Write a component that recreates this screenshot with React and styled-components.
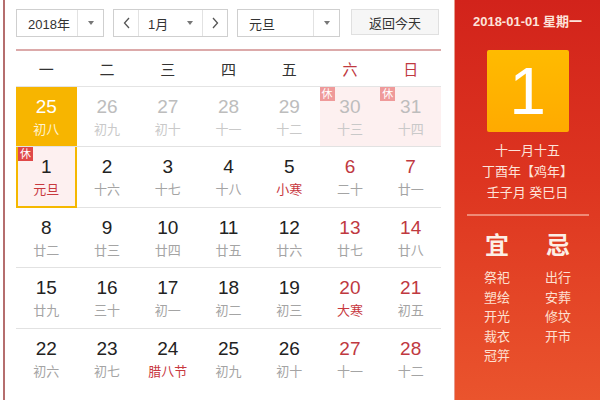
import React from "react";
import styled, { createGlobalStyle, css } from "styled-components";

const GlobalStyle = createGlobalStyle`
  html, body {
    margin: 0;
    padding: 0;
    background: #fff;
    font-family: "Liberation Sans", "Noto Sans CJK SC", sans-serif;
  }
`;

const weekdays = ["一", "二", "三", "四", "五", "六", "日"];

const rows = [
  [
    { d: 25, l: "初八", prev: true, today: true },
    { d: 26, l: "初九", prev: true },
    { d: 27, l: "初十", prev: true },
    { d: 28, l: "十一", prev: true },
    { d: 29, l: "十二", prev: true },
    { d: 30, l: "十三", prev: true, rest: true },
    { d: 31, l: "十四", prev: true, rest: true },
  ],
  [
    { d: 1, l: "元旦", fest: true, rest: true, selected: true },
    { d: 2, l: "十六" },
    { d: 3, l: "十七" },
    { d: 4, l: "十八" },
    { d: 5, l: "小寒", fest: true },
    { d: 6, l: "二十" },
    { d: 7, l: "廿一" },
  ],
  [
    { d: 8, l: "廿二" },
    { d: 9, l: "廿三" },
    { d: 10, l: "廿四" },
    { d: 11, l: "廿五" },
    { d: 12, l: "廿六" },
    { d: 13, l: "廿七" },
    { d: 14, l: "廿八" },
  ],
  [
    { d: 15, l: "廿九" },
    { d: 16, l: "三十" },
    { d: 17, l: "初一" },
    { d: 18, l: "初二" },
    { d: 19, l: "初三" },
    { d: 20, l: "大寒", fest: true },
    { d: 21, l: "初五" },
  ],
  [
    { d: 22, l: "初六" },
    { d: 23, l: "初七" },
    { d: 24, l: "腊八节", fest: true },
    { d: 25, l: "初九" },
    { d: 26, l: "初十" },
    { d: 27, l: "十一" },
    { d: 28, l: "十二" },
  ],
];

const yi = ["祭祀", "塑绘", "开光", "裁衣", "冠笄"];
const ji = ["出行", "安葬", "修坟", "开市"];

const Chevron = ({ dir }) => (
  <svg width="7" height="12" viewBox="0 0 7 12">
    <path
      d={dir === "left" ? "M6 1 L1.5 6 L6 11" : "M1 1 L5.5 6 L1 11"}
      fill="none"
      stroke="#555"
      strokeWidth="1.3"
    />
  </svg>
);

const App = () => {
  return (
    <>
      <GlobalStyle />
      <Page>
        <Main>
          <Toolbar>
            <Select $w={88}>
              <SelectText>2018年</SelectText>
              <ArrowBox>
                <Caret />
              </ArrowBox>
            </Select>
            <MonthGroup>
              <NavBtn>
                <Chevron dir="left" />
              </NavBtn>
              <MonthText>1月</MonthText>
              <MonthArrow>
                <Caret />
              </MonthArrow>
              <NavBtn $right>
                <Chevron dir="right" />
              </NavBtn>
            </MonthGroup>
            <Select $w={103}>
              <SelectText>元旦</SelectText>
              <ArrowBox>
                <Caret />
              </ArrowBox>
            </Select>
            <TodayButton>返回今天</TodayButton>
          </Toolbar>
          <Rule />
          <WeekRow>
            {weekdays.map((w, i) => (
              <WeekCell key={w} $weekend={i > 4}>
                {w}
              </WeekCell>
            ))}
          </WeekRow>
          {rows.map((row, ri) => (
            <Row key={ri} $last={ri === rows.length - 1}>
              {row.map((c, ci) => (
                <Cell
                  key={ci}
                  $today={c.today}
                  $rest={c.rest}
                  $selected={c.selected}
                >
                  {c.rest && <RestBadge $faded={c.prev}>休</RestBadge>}
                  <DayNum
                    $prev={c.prev}
                    $today={c.today}
                    $weekend={ci > 4}
                  >
                    {c.d}
                  </DayNum>
                  <Lunar $prev={c.prev} $today={c.today} $fest={c.fest}>
                    {c.l}
                  </Lunar>
                </Cell>
              ))}
            </Row>
          ))}
        </Main>
        <Side>
          <DateLine>2018-01-01 星期一</DateLine>
          <BigDay>1</BigDay>
          <LunarInfo>
            <div>十一月十五</div>
            <div>丁酉年【鸡年】</div>
            <div>壬子月 癸巳日</div>
          </LunarInfo>
          <SideRule />
          <Almanac>
            <AlmanacCol>
              <AlmanacHead>宜</AlmanacHead>
              {yi.map((t) => (
                <AlmanacItem key={t}>{t}</AlmanacItem>
              ))}
            </AlmanacCol>
            <AlmanacCol>
              <AlmanacHead>忌</AlmanacHead>
              {ji.map((t) => (
                <AlmanacItem key={t}>{t}</AlmanacItem>
              ))}
            </AlmanacCol>
          </Almanac>
        </Side>
      </Page>
    </>
  );
};

const Page = styled.div`
  display: flex;
  height: 400px;
  width: 600px;
  overflow: hidden;
`;

const Main = styled.div`
  box-sizing: border-box;
  width: 451px;
  margin-left: 3px;
  border-left: 2px solid #b56e6e;
  padding: 9px 0 0 11px;
`;

const Toolbar = styled.div`
  display: flex;
  align-items: flex-start;
  width: 425px;
  height: 28px;
`;

const Select = styled.div`
  box-sizing: border-box;
  display: flex;
  align-items: center;
  width: ${(p) => p.$w}px;
  height: 28px;
  border: 1px solid #cfcfcf;
  background: #fff;
  margin-right: 9px;
`;

const SelectText = styled.span`
  flex: 1;
  padding-left: 11px;
  font-size: 13px;
  color: #333;
`;

const ArrowBox = styled.span`
  display: flex;
  align-items: center;
  justify-content: center;
  width: 25px;
  height: 100%;
  border-left: 1px solid #e2e2e2;
`;

const Caret = styled.span`
  width: 0;
  height: 0;
  border-left: 3.5px solid transparent;
  border-right: 3.5px solid transparent;
  border-top: 4px solid #777;
`;

const MonthGroup = styled.div`
  box-sizing: border-box;
  display: flex;
  align-items: center;
  width: 115px;
  height: 28px;
  border: 1px solid #cfcfcf;
  margin-right: 9px;
`;

const NavBtn = styled.span`
  display: flex;
  align-items: center;
  justify-content: center;
  width: 24px;
  height: 100%;
  ${(p) =>
    p.$right
      ? css`
          border-left: 1px solid #e2e2e2;
        `
      : css`
          border-right: 1px solid #e2e2e2;
        `}
`;

const MonthText = styled.span`
  flex: 1;
  padding-left: 9px;
  font-size: 13px;
  color: #333;
`;

const MonthArrow = styled.span`
  display: flex;
  align-items: center;
  padding-right: 9px;
`;

const TodayButton = styled.div`
  box-sizing: border-box;
  display: flex;
  align-items: center;
  justify-content: center;
  width: 88px;
  height: 26px;
  margin-left: 2px;
  background: #f6f6f6;
  border: 1px solid #e0e0e0;
  font-size: 13px;
  color: #333;
`;

const Rule = styled.div`
  width: 425px;
  height: 2px;
  margin-top: 12px;
  background: #dcaaaa;
`;

const WeekRow = styled.div`
  display: grid;
  grid-template-columns: repeat(7, 1fr);
  width: 425px;
  height: 35px;
  align-items: center;
  border-bottom: 1px solid #e4e4e4;
`;

const WeekCell = styled.div`
  text-align: center;
  font-size: 15px;
  color: ${(p) => (p.$weekend ? "#c0393f" : "#333")};
`;

const Row = styled.div`
  box-sizing: border-box;
  display: grid;
  grid-template-columns: repeat(7, 1fr);
  width: 425px;
  height: 60.4px;
  border-bottom: ${(p) => (p.$last ? "none" : "1px solid #e2e2e2")};
`;

const Cell = styled.div`
  position: relative;
  box-sizing: border-box;
  display: flex;
  flex-direction: column;
  align-items: center;
  padding-top: 9px;
  ${(p) =>
    p.$rest &&
    css`
      background: #fdf0f0;
    `}
  ${(p) =>
    p.$today &&
    css`
      background: #f7b500;
    `}
  ${(p) =>
    p.$selected &&
    css`
      border: 2px solid #f5b800;
      border-top: none;
      padding-top: 9px;
      margin-bottom: -1px;
    `}
`;

const RestBadge = styled.span`
  position: absolute;
  top: 0;
  left: 0;
  width: 15px;
  height: 14px;
  line-height: 14px;
  text-align: center;
  font-size: 11px;
  color: #fff;
  background: ${(p) => (p.$faded ? "#ef9a9a" : "#e04848")};
`;

const DayNum = styled.div`
  font-size: 19px;
  line-height: 22px;
  color: ${(p) =>
    p.$today ? "#fff" : p.$prev ? "#bdbdbd" : p.$weekend ? "#c0393f" : "#222"};
`;

const Lunar = styled.div`
  margin-top: 3px;
  font-size: 13px;
  line-height: 18px;
  color: ${(p) =>
    p.$today
      ? "#fff3d0"
      : p.$fest
      ? "#c8393f"
      : p.$prev
      ? "#c9c9c9"
      : "#a4a4a4"};
`;

const Side = styled.div`
  box-sizing: border-box;
  flex: 1;
  display: flex;
  flex-direction: column;
  align-items: center;
  height: 400px;
  border-left: 1px solid #e79a8c;
  background: linear-gradient(180deg, #d2231b 0%, #dd3520 45%, #ea542d 100%);
  color: #fde6dc;
`;

const DateLine = styled.div`
  margin-top: 14px;
  font-size: 13px;
  font-weight: bold;
  line-height: 16px;
  color: #fde3da;
`;

const BigDay = styled.div`
  display: flex;
  align-items: center;
  justify-content: center;
  width: 82px;
  height: 82px;
  margin-top: 20px;
  border-radius: 2px;
  background: linear-gradient(180deg, #ffbb00 0%, #ffaa00 100%);
  font-size: 66px;
  color: #fff;
`;

const LunarInfo = styled.div`
  margin-top: 8px;
  text-align: center;
  font-size: 13px;
  line-height: 21px;
  color: #fde3da;
`;

const SideRule = styled.div`
  width: 122px;
  height: 2px;
  margin-top: 11px;
  background: #ef8a76;
`;

const Almanac = styled.div`
  display: flex;
  gap: 34px;
  margin-top: 16px;
`;

const AlmanacCol = styled.div`
  display: flex;
  flex-direction: column;
  align-items: center;
  width: 27px;
`;

const AlmanacHead = styled.div`
  font-size: 24px;
  font-weight: bold;
  line-height: 28px;
  margin-bottom: 8px;
  color: #fcefe6;
`;

const AlmanacItem = styled.div`
  font-size: 13px;
  line-height: 19.5px;
  white-space: nowrap;
  color: #fde0d2;
`;

export default App;
